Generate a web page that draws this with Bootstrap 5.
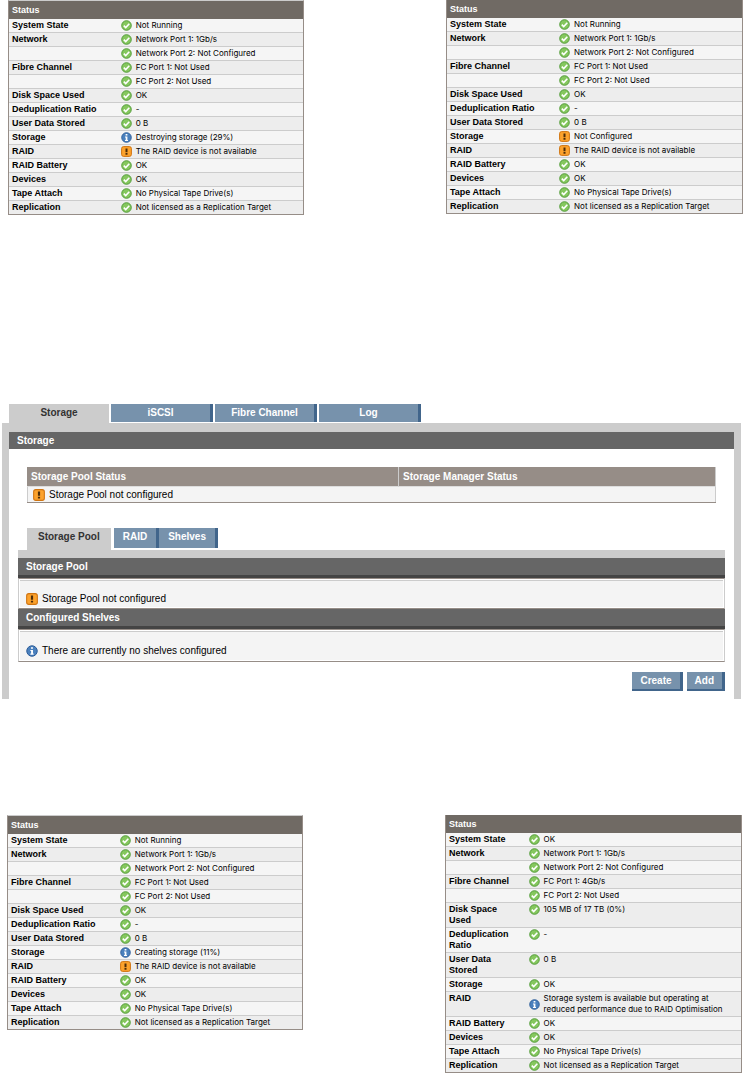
<!DOCTYPE html>
<html lang="en">
<head>
<meta charset="utf-8">
<meta name="viewport" content="width=device-width, initial-scale=1">
<title>Storage status</title>
<link rel="stylesheet" href="https://cdn.jsdelivr.net/npm/bootstrap@5.3.0/dist/css/bootstrap.min.css">
<style>
  body { font-family: "Liberation Sans", Arial, sans-serif; font-size: 10px; line-height: 12px; color: #000; background: #fff; }
  a { text-decoration: none; }

  /* status summaries */
  .status-pair { display: grid; grid-template-columns: 296fr 142fr 297fr; align-items: start; padding: 0 1px 0 8px; }
  .status-pair.lower { padding: 0 2px 0 7px; }
  .status-pair > :last-child { grid-column: 3; }
  .status-table { width: 100%; table-layout: fixed; border-collapse: separate; border-spacing: 0; font-size: 9px; line-height: 11px; border: 1px solid #968d87; border-top: 0; }
  .status-table.topped { border-top: 1px solid #ccc; }
  .status-table thead th { background: #706a64; color: #fff; height: 18px; padding: 0 3px; line-height: 17px; }
  .status-table tbody th, .status-table td { vertical-align: top; padding: 1px 0 1px 3px; height: 14px; border-bottom: 1px solid #ccc; }
  .status-table td { padding-left: 0; font-family: Inter, "Liberation Sans", sans-serif; font-size: 8px; }
  .status-table tbody tr { background: #f5f5f5; }
  .status-table tbody tr:nth-child(even) { background: #ededed; }
  .status-table tbody tr:last-child > * { border-bottom: 0; height: 13px; }
  .col-name { width: 38%; }
  .narrow .col-name { width: 28%; }
  .ico { width: 11px; height: 11px; flex: none; }
  .ico-lg { width: 12px; height: 12px; flex: none; }

  /* tabs */
  .tab-strip { gap: 2px; font-weight: 700; }
  .tab-strip a { background: #7792ac; color: #fff; text-align: center; border-right: 3px solid #41658b; margin-bottom: 1px; }
  .tab-strip a.active { background: #ccc; color: #333; border-right: 0; margin-bottom: 0; }
  .tab-main { margin-left: 7px; }
  .tab-main a { width: 102px; height: 18px; line-height: 17px; }
  .tab-main a.active { width: 100px; height: 19px; }
  .tab-sub { margin-left: 9px; gap: 0; }
  .tab-sub a { padding: 0 9px; height: 20px; line-height: 17px; margin-bottom: 2px; }
  .tab-sub a.active { height: 22px; margin-right: 3px; padding: 0 11px; }

  .main-area { margin: 189px 3px 116px 2px; }
  .main-panel { border: 7px solid #ccc; border-top-width: 9px; border-bottom: 0; }
  .bar { background: #666; color: #fff; font-weight: 700; height: 17px; line-height: 17px; padding-left: 8px; }
  .pool-table { width: 100%; table-layout: fixed; border-collapse: separate; border-spacing: 0; border-bottom: 1px solid #968d87; }
  .pool-table th { background: #968d87; color: #fff; height: 20px; padding: 0 4px; border-right: 1px solid #ccc; border-bottom: 1px solid #ddd; }
  .pool-table td { background: #f4f4f4; height: 15px; padding: 0 5px; border-right: 1px solid #ccc; }
  .pool-table td:first-child { border-left: 1px solid #ccc; border-right: 0; }
  .col-pool { width: 54%; }
  .pool-wrap { padding: 18px 18px 25px; }
  .sub-wrap { padding: 0 9px 8px; }
  .sub-panel { border-top: 8px solid #ccc; }
  .bar-deep { height: 20px; border-bottom: 3px solid #444; }
  .fold { border: 1px solid #ccc; border-top-color: #968d87; border-bottom-color: #968d87; padding: 1px; }
  .fold > div { background: #f4f4f4; border-top: 1px solid #ccc; padding: 12px 6px 2px; }
  .fold.roomy > div { padding: 13px 6px 3px; }
  .act-row { padding-top: 10px; }
  .act { background: #7792ac; color: #fff; border: 0; border-right: 3px solid #41658b; border-bottom: 2px solid #41658b; border-radius: 0; font: inherit; font-weight: 700; height: 19px; padding: 0 8px; }
</style>
</head>
<body>
<svg class="d-none" aria-hidden="true">
  <symbol id="ok" viewBox="0 0 11 11"><circle cx="5.5" cy="5.5" r="4.8" fill="#85c75e" stroke="#4d9733" stroke-width=".9"/><path d="M2.8 5.6 4.7 7.5 8.3 3.7" fill="none" stroke="#fff" stroke-width="1.6"/></symbol>
  <symbol id="info" viewBox="0 0 11 11"><circle cx="5.5" cy="5.5" r="4.8" fill="#4a80bd" stroke="#2c5c98" stroke-width=".9"/><path d="M4.6 2h1.8v1.5H4.6zM4 4.5h2.4v3.4H7V9H4V7.9h.7V5.5H4z" fill="#fff"/></symbol>
  <symbol id="warn" viewBox="0 0 11 11"><rect x=".6" y=".6" width="9.8" height="9.8" rx="2" fill="#fca22c" stroke="#d07410"/><path d="M4.5 2.4h2v3.8h-2zM4.5 7h2v1.8h-2z" fill="#4d2c08"/></symbol>
</svg>

<section class="status-pair">
  <table class="status-table topped">
    <colgroup><col class="col-name"><col></colgroup>
    <thead><tr><th colspan="2">Status</th></tr></thead>
    <tbody>
      <tr><th>System State</th><td><div class="d-flex align-items-center gap-1"><svg class="ico"><use href="#ok"/></svg><span>Not Running</span></div></td></tr>
      <tr><th>Network</th><td><div class="d-flex align-items-center gap-1"><svg class="ico"><use href="#ok"/></svg><span>Network Port 1: 1Gb/s</span></div></td></tr>
      <tr><th></th><td><div class="d-flex align-items-center gap-1"><svg class="ico"><use href="#ok"/></svg><span>Network Port 2: Not Configured</span></div></td></tr>
      <tr><th>Fibre Channel</th><td><div class="d-flex align-items-center gap-1"><svg class="ico"><use href="#ok"/></svg><span>FC Port 1: Not Used</span></div></td></tr>
      <tr><th></th><td><div class="d-flex align-items-center gap-1"><svg class="ico"><use href="#ok"/></svg><span>FC Port 2: Not Used</span></div></td></tr>
      <tr><th>Disk Space Used</th><td><div class="d-flex align-items-center gap-1"><svg class="ico"><use href="#ok"/></svg><span>OK</span></div></td></tr>
      <tr><th>Deduplication Ratio</th><td><div class="d-flex align-items-center gap-1"><svg class="ico"><use href="#ok"/></svg><span>-</span></div></td></tr>
      <tr><th>User Data Stored</th><td><div class="d-flex align-items-center gap-1"><svg class="ico"><use href="#ok"/></svg><span>0 B</span></div></td></tr>
      <tr><th>Storage</th><td><div class="d-flex align-items-center gap-1"><svg class="ico"><use href="#info"/></svg><span>Destroying storage (29%)</span></div></td></tr>
      <tr><th>RAID</th><td><div class="d-flex align-items-center gap-1"><svg class="ico"><use href="#warn"/></svg><span>The RAID device is not available</span></div></td></tr>
      <tr><th>RAID Battery</th><td><div class="d-flex align-items-center gap-1"><svg class="ico"><use href="#ok"/></svg><span>OK</span></div></td></tr>
      <tr><th>Devices</th><td><div class="d-flex align-items-center gap-1"><svg class="ico"><use href="#ok"/></svg><span>OK</span></div></td></tr>
      <tr><th>Tape Attach</th><td><div class="d-flex align-items-center gap-1"><svg class="ico"><use href="#ok"/></svg><span>No Physical Tape Drive(s)</span></div></td></tr>
      <tr><th>Replication</th><td><div class="d-flex align-items-center gap-1"><svg class="ico"><use href="#ok"/></svg><span>Not licensed as a Replication Target</span></div></td></tr>
    </tbody>
  </table>
  <table class="status-table">
    <colgroup><col class="col-name"><col></colgroup>
    <thead><tr><th colspan="2">Status</th></tr></thead>
    <tbody>
      <tr><th>System State</th><td><div class="d-flex align-items-center gap-1"><svg class="ico"><use href="#ok"/></svg><span>Not Running</span></div></td></tr>
      <tr><th>Network</th><td><div class="d-flex align-items-center gap-1"><svg class="ico"><use href="#ok"/></svg><span>Network Port 1: 1Gb/s</span></div></td></tr>
      <tr><th></th><td><div class="d-flex align-items-center gap-1"><svg class="ico"><use href="#ok"/></svg><span>Network Port 2: Not Configured</span></div></td></tr>
      <tr><th>Fibre Channel</th><td><div class="d-flex align-items-center gap-1"><svg class="ico"><use href="#ok"/></svg><span>FC Port 1: Not Used</span></div></td></tr>
      <tr><th></th><td><div class="d-flex align-items-center gap-1"><svg class="ico"><use href="#ok"/></svg><span>FC Port 2: Not Used</span></div></td></tr>
      <tr><th>Disk Space Used</th><td><div class="d-flex align-items-center gap-1"><svg class="ico"><use href="#ok"/></svg><span>OK</span></div></td></tr>
      <tr><th>Deduplication Ratio</th><td><div class="d-flex align-items-center gap-1"><svg class="ico"><use href="#ok"/></svg><span>-</span></div></td></tr>
      <tr><th>User Data Stored</th><td><div class="d-flex align-items-center gap-1"><svg class="ico"><use href="#ok"/></svg><span>0 B</span></div></td></tr>
      <tr><th>Storage</th><td><div class="d-flex align-items-center gap-1"><svg class="ico"><use href="#warn"/></svg><span>Not Configured</span></div></td></tr>
      <tr><th>RAID</th><td><div class="d-flex align-items-center gap-1"><svg class="ico"><use href="#warn"/></svg><span>The RAID device is not available</span></div></td></tr>
      <tr><th>RAID Battery</th><td><div class="d-flex align-items-center gap-1"><svg class="ico"><use href="#ok"/></svg><span>OK</span></div></td></tr>
      <tr><th>Devices</th><td><div class="d-flex align-items-center gap-1"><svg class="ico"><use href="#ok"/></svg><span>OK</span></div></td></tr>
      <tr><th>Tape Attach</th><td><div class="d-flex align-items-center gap-1"><svg class="ico"><use href="#ok"/></svg><span>No Physical Tape Drive(s)</span></div></td></tr>
      <tr><th>Replication</th><td><div class="d-flex align-items-center gap-1"><svg class="ico"><use href="#ok"/></svg><span>Not licensed as a Replication Target</span></div></td></tr>
    </tbody>
  </table>
</section>

<main class="main-area">
  <nav class="tab-strip tab-main d-flex">
    <a class="active" href="#storage">Storage</a>
    <a href="#iscsi">iSCSI</a>
    <a href="#fc">Fibre Channel</a>
    <a href="#log">Log</a>
  </nav>
  <div class="main-panel" id="storage">
    <div class="bar">Storage</div>
    <div class="pool-wrap">
      <table class="pool-table">
        <colgroup><col class="col-pool"><col></colgroup>
        <thead><tr><th>Storage Pool Status</th><th>Storage Manager Status</th></tr></thead>
        <tbody><tr><td><div class="d-flex align-items-center gap-1"><svg class="ico-lg"><use href="#warn"/></svg><span>Storage Pool not configured</span></div></td><td></td></tr></tbody>
      </table>
    </div>
    <div class="sub-wrap">
      <nav class="tab-strip tab-sub d-flex">
        <a class="active" href="#pool">Storage Pool</a>
        <a href="#raid">RAID</a>
        <a href="#shelves">Shelves</a>
      </nav>
      <div class="sub-panel" id="pool">
        <div class="bar bar-deep">Storage Pool</div>
        <div class="fold"><div class="d-flex align-items-center gap-1"><svg class="ico-lg"><use href="#warn"/></svg><span>Storage Pool not configured</span></div></div>
        <div class="bar bar-deep">Configured Shelves</div>
        <div class="fold roomy"><div class="d-flex align-items-center gap-1"><svg class="ico-lg"><use href="#info"/></svg><span>There are currently no shelves configured</span></div></div>
      </div>
      <div class="act-row d-flex justify-content-end gap-1">
        <button type="button" class="act">Create</button>
        <button type="button" class="act">Add</button>
      </div>
    </div>
  </div>
</main>

<section class="status-pair lower">
  <table class="status-table topped">
    <colgroup><col class="col-name"><col></colgroup>
    <thead><tr><th colspan="2">Status</th></tr></thead>
    <tbody>
      <tr><th>System State</th><td><div class="d-flex align-items-center gap-1"><svg class="ico"><use href="#ok"/></svg><span>Not Running</span></div></td></tr>
      <tr><th>Network</th><td><div class="d-flex align-items-center gap-1"><svg class="ico"><use href="#ok"/></svg><span>Network Port 1: 1Gb/s</span></div></td></tr>
      <tr><th></th><td><div class="d-flex align-items-center gap-1"><svg class="ico"><use href="#ok"/></svg><span>Network Port 2: Not Configured</span></div></td></tr>
      <tr><th>Fibre Channel</th><td><div class="d-flex align-items-center gap-1"><svg class="ico"><use href="#ok"/></svg><span>FC Port 1: Not Used</span></div></td></tr>
      <tr><th></th><td><div class="d-flex align-items-center gap-1"><svg class="ico"><use href="#ok"/></svg><span>FC Port 2: Not Used</span></div></td></tr>
      <tr><th>Disk Space Used</th><td><div class="d-flex align-items-center gap-1"><svg class="ico"><use href="#ok"/></svg><span>OK</span></div></td></tr>
      <tr><th>Deduplication Ratio</th><td><div class="d-flex align-items-center gap-1"><svg class="ico"><use href="#ok"/></svg><span>-</span></div></td></tr>
      <tr><th>User Data Stored</th><td><div class="d-flex align-items-center gap-1"><svg class="ico"><use href="#ok"/></svg><span>0 B</span></div></td></tr>
      <tr><th>Storage</th><td><div class="d-flex align-items-center gap-1"><svg class="ico"><use href="#info"/></svg><span>Creating storage (11%)</span></div></td></tr>
      <tr><th>RAID</th><td><div class="d-flex align-items-center gap-1"><svg class="ico"><use href="#warn"/></svg><span>The RAID device is not available</span></div></td></tr>
      <tr><th>RAID Battery</th><td><div class="d-flex align-items-center gap-1"><svg class="ico"><use href="#ok"/></svg><span>OK</span></div></td></tr>
      <tr><th>Devices</th><td><div class="d-flex align-items-center gap-1"><svg class="ico"><use href="#ok"/></svg><span>OK</span></div></td></tr>
      <tr><th>Tape Attach</th><td><div class="d-flex align-items-center gap-1"><svg class="ico"><use href="#ok"/></svg><span>No Physical Tape Drive(s)</span></div></td></tr>
      <tr><th>Replication</th><td><div class="d-flex align-items-center gap-1"><svg class="ico"><use href="#ok"/></svg><span>Not licensed as a Replication Target</span></div></td></tr>
    </tbody>
  </table>
  <table class="status-table narrow">
    <colgroup><col class="col-name"><col></colgroup>
    <thead><tr><th colspan="2">Status</th></tr></thead>
    <tbody>
      <tr><th>System State</th><td><div class="d-flex align-items-center gap-1"><svg class="ico"><use href="#ok"/></svg><span>OK</span></div></td></tr>
      <tr><th>Network</th><td><div class="d-flex align-items-center gap-1"><svg class="ico"><use href="#ok"/></svg><span>Network Port 1: 1Gb/s</span></div></td></tr>
      <tr><th></th><td><div class="d-flex align-items-center gap-1"><svg class="ico"><use href="#ok"/></svg><span>Network Port 2: Not Configured</span></div></td></tr>
      <tr><th>Fibre Channel</th><td><div class="d-flex align-items-center gap-1"><svg class="ico"><use href="#ok"/></svg><span>FC Port 1: 4Gb/s</span></div></td></tr>
      <tr><th></th><td><div class="d-flex align-items-center gap-1"><svg class="ico"><use href="#ok"/></svg><span>FC Port 2: Not Used</span></div></td></tr>
      <tr><th>Disk Space<br>Used</th><td><div class="d-flex align-items-center gap-1"><svg class="ico"><use href="#ok"/></svg><span>105 MB of 17 TB (0%)</span></div></td></tr>
      <tr><th>Deduplication<br>Ratio</th><td><div class="d-flex align-items-center gap-1"><svg class="ico"><use href="#ok"/></svg><span>-</span></div></td></tr>
      <tr><th>User Data<br>Stored</th><td><div class="d-flex align-items-center gap-1"><svg class="ico"><use href="#ok"/></svg><span>0 B</span></div></td></tr>
      <tr><th>Storage</th><td><div class="d-flex align-items-center gap-1"><svg class="ico"><use href="#ok"/></svg><span>OK</span></div></td></tr>
      <tr><th>RAID</th><td><div class="d-flex align-items-center gap-1"><svg class="ico"><use href="#info"/></svg><span>Storage system is available but operating at<br>reduced performance due to RAID Optimisation</span></div></td></tr>
      <tr><th>RAID Battery</th><td><div class="d-flex align-items-center gap-1"><svg class="ico"><use href="#ok"/></svg><span>OK</span></div></td></tr>
      <tr><th>Devices</th><td><div class="d-flex align-items-center gap-1"><svg class="ico"><use href="#ok"/></svg><span>OK</span></div></td></tr>
      <tr><th>Tape Attach</th><td><div class="d-flex align-items-center gap-1"><svg class="ico"><use href="#ok"/></svg><span>No Physical Tape Drive(s)</span></div></td></tr>
      <tr><th>Replication</th><td><div class="d-flex align-items-center gap-1"><svg class="ico"><use href="#ok"/></svg><span>Not licensed as a Replication Target</span></div></td></tr>
    </tbody>
  </table>
</section>
<script src="https://cdn.jsdelivr.net/npm/bootstrap@5.3.0/dist/js/bootstrap.bundle.min.js"></script>
</body>
</html>
